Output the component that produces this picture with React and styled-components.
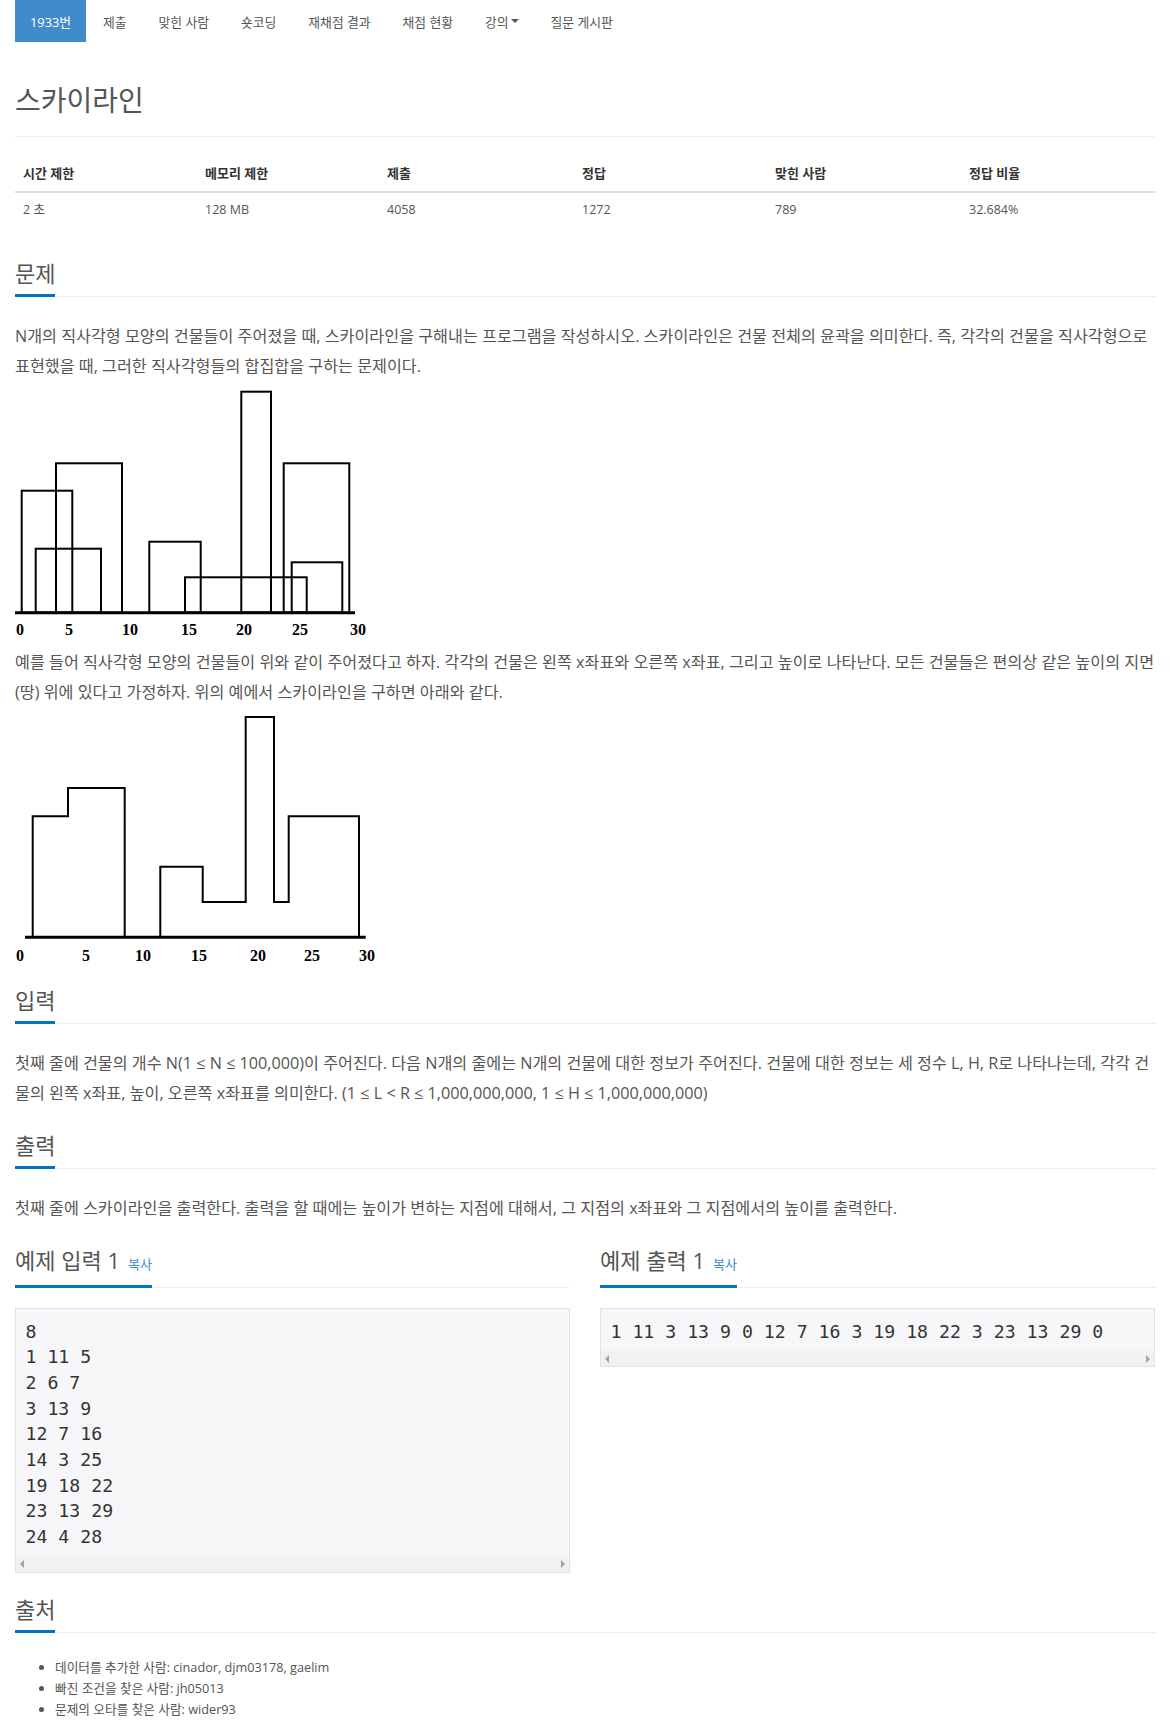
import styled, { createGlobalStyle } from "styled-components";

const GlobalStyle = createGlobalStyle`
  html, body {
    margin: 0;
    padding: 0;
    background: #fff;
  }
  body {
    font-family: "Open Sans", "Noto Sans CJK KR", sans-serif;
    color: #555;
  }
`;

const Page = styled.div`
  width: 1140px;
  padding: 0 15px;
`;

const Nav = styled.ul`
  display: flex;
  margin: 0;
  padding: 0;
  list-style: none;
`;

const NavItem = styled.li`
  margin-left: 2px;
  &:first-child {
    margin-left: 0;
  }
`;

const NavLink = styled.a`
  display: flex;
  align-items: center;
  height: 42px;
  padding: 0 15px;
  font-size: 12.8px;
  color: ${(p) => (p.$active ? "#fff" : "#555")};
  background: ${(p) => (p.$active ? "#428bca" : "transparent")};
  text-decoration: none;
`;

const Caret = styled.span`
  display: inline-block;
  width: 0;
  height: 0;
  margin-left: 2px;
  border-top: 4px solid #555;
  border-left: 4px solid transparent;
  border-right: 4px solid transparent;
`;

const Title = styled.h1`
  margin: 38px 0 0;
  padding-bottom: 16px;
  border-bottom: 1px solid #eee;
  font-size: 28px;
  font-weight: 400;
  line-height: 40px;
  color: #555;
`;

const InfoTable = styled.table`
  width: 100%;
  margin-top: 18px;
  border-collapse: collapse;
  table-layout: fixed;
`;

const Th = styled.th`
  box-sizing: border-box;
  width: ${(p) => p.$w}px;
  padding: 8px;
  text-align: left;
  font-size: 13px;
  line-height: 20px;
  font-weight: 700;
  color: #333;
  border-bottom: 2px solid #ddd;
`;

const Td = styled.td`
  padding: 7px 8px 8px;
  font-size: 12.5px;
  line-height: 20px;
  color: #555;
`;

const Section = styled.section`
  margin-top: ${(p) => p.$top ?? 22}px;
`;

const Headline = styled.div`
  display: flex;
  border-bottom: 1px dotted #ddd;
`;

const HeadTitle = styled.h2`
  margin: 0 0 -1px;
  padding-bottom: 6px;
  border-bottom: 3px solid #0076c0;
  font-size: 22px;
  font-weight: 400;
  line-height: 30px;
  color: #555;
`;

const CopyLink = styled.a`
  margin-left: 8px;
  font-size: 13px;
  color: #428bca;
  text-decoration: none;
`;

const Body = styled.div`
  margin-top: 24px;
`;

const Text = styled.p`
  margin: ${(p) => p.$top ?? 0}px 0 0;
  font-size: 16.2px;
  line-height: 30px;
  color: #555;
`;

const Figure = styled.svg`
  display: block;
  margin-top: ${(p) => p.$top}px;
`;

const SampleRow = styled.div`
  display: grid;
  grid-template-columns: 1fr 1fr;
  column-gap: 30px;
`;

const SampleBox = styled.div`
  margin-top: 20px;
  background: #f7f7f9;
  border: 1px solid #e1e1e8;
`;

const Pre = styled.pre`
  margin: 0;
  padding: 9.5px 9.5px 7px;
  font-family: "DejaVu Sans Mono", monospace;
  font-size: 18.2px;
  line-height: 25.7px;
  color: #333;
`;

const ScrollTrack = styled.div`
  display: flex;
  justify-content: space-between;
  align-items: center;
  height: 15px;
  padding: 0 4px;
  background: #f1f1f1;
`;

const Arrow = styled.span`
  width: 0;
  height: 0;
  border-top: 4px solid transparent;
  border-bottom: 4px solid transparent;
  border-left: ${(p) => (p.$dir === "right" ? "4px solid #a3a3a3" : "0")};
  border-right: ${(p) => (p.$dir === "left" ? "4px solid #a3a3a3" : "0")};
`;

const Credits = styled.ul`
  margin: 24px 0 0;
  padding-left: 40px;
  font-size: 12.7px;
  line-height: 21px;
  color: #555;
`;

const navItems = ["제출", "맞힌 사람", "숏코딩", "재채점 결과", "채점 현황"];

const info = [
  ["시간 제한", "2 초", 182],
  ["메모리 제한", "128 MB", 182],
  ["제출", "4058", 195],
  ["정답", "1272", 193],
  ["맞힌 사람", "789", 194],
  ["정답 비율", "32.684%", 194],
];

const buildings = [
  [6.7, 57.3, 102.7],
  [41, 107, 75.3],
  [20.7, 86, 160.7],
  [134.3, 185.7, 153.7],
  [170, 291.7, 189.3],
  [226.3, 256, 3.7],
  [268.7, 334.3, 75.3],
  [276.7, 327.3, 174.3],
];

const labels1 = [5, 54, 115, 174, 229, 285, 343];
const labels2 = [5, 71, 128, 184, 243, 297, 352];
const ticks = ["0", "5", "10", "15", "20", "25", "30"];

const labelStyle = {
  fontFamily: '"Liberation Serif", serif',
  fontWeight: 700,
  fontSize: 16,
};

const BuildingsFigure = () => (
  <Figure $top={7} width="352" height="250" viewBox="0 0 352 250">
    {buildings.map(([x1, x2, top], i) => (
      <rect
        key={i}
        x={x1}
        y={top}
        width={x2 - x1}
        height={224.7 - top}
        fill="none"
        stroke="#000"
        strokeWidth="2"
      />
    ))}
    <line x1="0" y1="224.7" x2="340" y2="224.7" stroke="#000" strokeWidth="3" />
    {ticks.map((t, i) => (
      <text key={t} x={labels1[i]} y="247" textAnchor="middle" style={labelStyle}>
        {t}
      </text>
    ))}
  </Figure>
);

const SkylineFigure = () => (
  <Figure $top={5} width="362" height="253" viewBox="0 0 362 253">
    <path
      d="M17.7 225.3 V104.3 H53 V76 H109.7 V225.3 M145.3 225.3 V154.7 H187.7 V190 H230.7 V5 H259 V190 H273.7 V104.3 H344 V225.3"
      fill="none"
      stroke="#000"
      strokeWidth="2"
    />
    <line x1="10" y1="225.3" x2="350.7" y2="225.3" stroke="#000" strokeWidth="3" />
    {ticks.map((t, i) => (
      <text key={t} x={labels2[i]} y="249" textAnchor="middle" style={labelStyle}>
        {t}
      </text>
    ))}
  </Figure>
);

const SectionHead = ({ children, copy }) => (
  <Headline>
    <HeadTitle>
      {children}
      {copy && <CopyLink href="#">복사</CopyLink>}
    </HeadTitle>
  </Headline>
);

const Sample = ({ children }) => (
  <SampleBox>
    <Pre>{children}</Pre>
    <ScrollTrack>
      <Arrow $dir="left" />
      <Arrow $dir="right" />
    </ScrollTrack>
  </SampleBox>
);

const sampleInput = `8
1 11 5
2 6 7
3 13 9
12 7 16
14 3 25
19 18 22
23 13 29
24 4 28`;

const sampleOutput = "1 11 3 13 9 0 12 7 16 3 19 18 22 3 23 13 29 0";

export default function App() {
  return (
    <Page>
      <GlobalStyle />
      <Nav>
        <NavItem>
          <NavLink $active href="#">1933번</NavLink>
        </NavItem>
        {navItems.map((item) => (
          <NavItem key={item}>
            <NavLink href="#">{item}</NavLink>
          </NavItem>
        ))}
        <NavItem>
          <NavLink href="#">
            강의
            <Caret />
          </NavLink>
        </NavItem>
        <NavItem>
          <NavLink href="#">질문 게시판</NavLink>
        </NavItem>
      </Nav>

      <Title>스카이라인</Title>

      <InfoTable>
        <thead>
          <tr>
            {info.map(([label, , w]) => (
              <Th key={label} $w={w}>
                {label}
              </Th>
            ))}
          </tr>
        </thead>
        <tbody>
          <tr>
            {info.map(([label, value]) => (
              <Td key={label}>{value}</Td>
            ))}
          </tr>
        </tbody>
      </InfoTable>

      <Section $top={30}>
        <SectionHead>문제</SectionHead>
        <Body>
          <Text>
            N개의 직사각형 모양의 건물들이 주어졌을 때, 스카이라인을 구해내는 프로그램을 작성하시오. 스카이라인은
            건물 전체의 윤곽을 의미한다. 즉, 각각의 건물을 직사각형으로 표현했을 때, 그러한 직사각형들의 합집합을
            구하는 문제이다.
          </Text>
          <BuildingsFigure />
          <Text $top={9}>
            예를 들어 직사각형 모양의 건물들이 위와 같이 주어졌다고 하자. 각각의 건물은 왼쪽 x좌표와 오른쪽 x좌표,
            그리고 높이로 나타난다. 모든 건물들은 편의상 같은 높이의 지면(땅) 위에 있다고 가정하자. 위의 예에서
            스카이라인을 구하면 아래와 같다.
          </Text>
          <SkylineFigure />
        </Body>
      </Section>

      <Section $top={20}>
        <SectionHead>입력</SectionHead>
        <Body>
          <Text>
            첫째 줄에 건물의 개수 N(1 ≤ N ≤ 100,000)이 주어진다. 다음 N개의 줄에는 N개의 건물에 대한 정보가
            주어진다. 건물에 대한 정보는 세 정수 L, H, R로 나타나는데, 각각 건물의 왼쪽 x좌표, 높이, 오른쪽 x좌표를
            의미한다. (1 ≤ L &lt; R ≤ 1,000,000,000, 1 ≤ H ≤ 1,000,000,000)
          </Text>
        </Body>
      </Section>

      <Section>
        <SectionHead>출력</SectionHead>
        <Body>
          <Text>
            첫째 줄에 스카이라인을 출력한다. 출력을 할 때에는 높이가 변하는 지점에 대해서, 그 지점의 x좌표와 그
            지점에서의 높이를 출력한다.
          </Text>
        </Body>
      </Section>

      <SampleRow>
        <Section>
          <SectionHead copy>예제 입력 1</SectionHead>
          <Sample>{sampleInput}</Sample>
        </Section>
        <Section>
          <SectionHead copy>예제 출력 1</SectionHead>
          <Sample>{sampleOutput}</Sample>
        </Section>
      </SampleRow>

      <Section $top={21}>
        <SectionHead>출처</SectionHead>
        <Credits>
          <li>데이터를 추가한 사람: cinador, djm03178, gaelim</li>
          <li>빠진 조건을 찾은 사람: jh05013</li>
          <li>문제의 오타를 찾은 사람: wider93</li>
        </Credits>
      </Section>
    </Page>
  );
}
